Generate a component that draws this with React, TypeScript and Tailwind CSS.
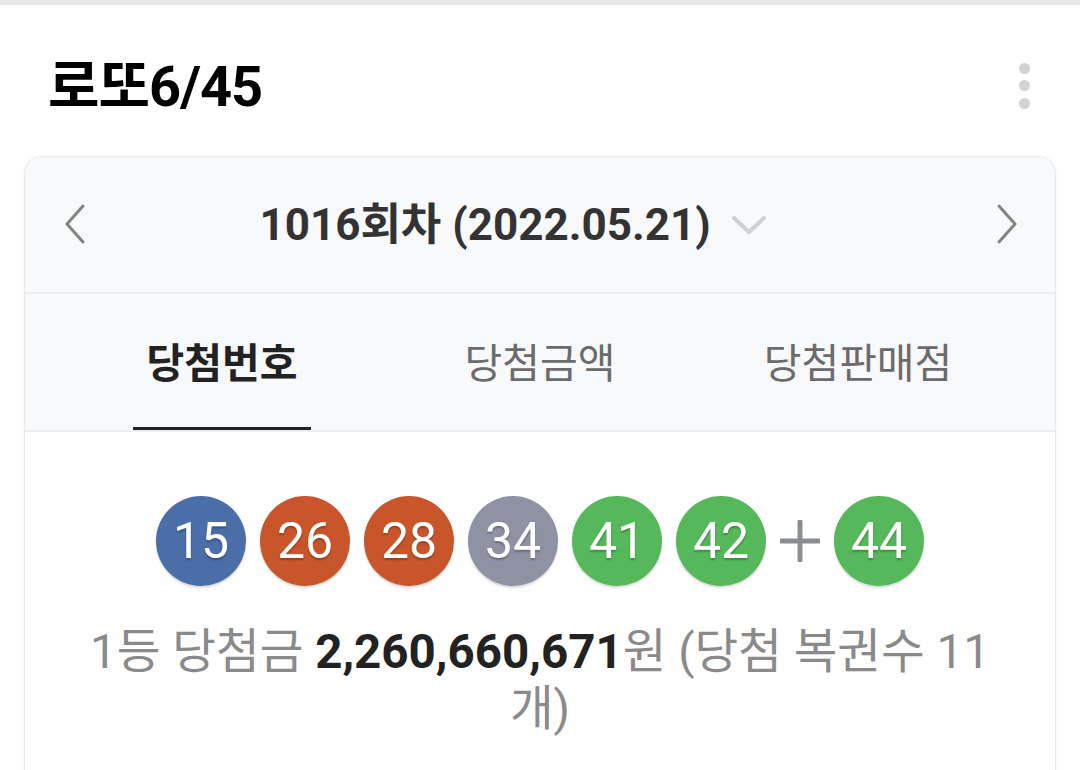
const balls = [
  { n: 15, c: "bg-[#4b6ea8]" },
  { n: 26, c: "bg-[#c9552a]" },
  { n: 28, c: "bg-[#c9552a]" },
  { n: 34, c: "bg-[#8e92a3]" },
  { n: 41, c: "bg-[#55b85a]" },
  { n: 42, c: "bg-[#55b85a]" },
]

function Ball({ n, c }: { n: number; c: string }) {
  return (
    <div
      className={`w-[90px] h-[90px] rounded-full ${c} flex items-center justify-center text-white text-[50px] shadow-[0_2px_2px_rgba(0,0,0,0.15)] [text-shadow:0_2px_2px_rgba(0,0,0,0.25)]`}
    >
      {n}
    </div>
  )
}

export default function App() {
  const tabs = ["당첨번호", "당첨금액", "당첨판매점"]
  return (
    <div
      className="w-[1080px] h-[770px] overflow-hidden bg-white"
      style={{ fontFamily: "Roboto, 'Noto Sans CJK KR', sans-serif" }}
    >
      <div className="h-[5px] bg-[#e8e9eb]" />
      <div className="flex items-center justify-between pl-[48px] pr-[50px] pt-[12px] h-[151px]">
        <h1 className="text-[56px] font-bold text-black tracking-[-1px]">로또6/45</h1>
        <div className="flex flex-col gap-[6.5px] pb-[2px]">
          <span className="w-[11px] h-[11px] rounded-full bg-[#d1d2d6]" />
          <span className="w-[11px] h-[11px] rounded-full bg-[#d1d2d6]" />
          <span className="w-[11px] h-[11px] rounded-full bg-[#d1d2d6]" />
        </div>
      </div>

      <div className="mx-[24px] rounded-t-[18px] border border-b-0 border-[#e6e8eb] shadow-[0_1px_4px_rgba(0,0,0,0.06)] overflow-hidden">
        <div className="bg-[#f8f9fb] h-[137px] flex items-center justify-between pl-[40px] pr-[38px] border-b-2 border-[#eceef1]">
          <svg width="20" height="40" viewBox="0 0 20 40" className="mt-[-2px]">
            <polyline points="18,2 2,20 18,38" fill="none" stroke="#828282" strokeWidth="3" strokeLinecap="round" strokeLinejoin="round" />
          </svg>
          <div className="flex items-center gap-[20px] pr-[56px]">
            <span className="text-[44px] font-bold text-[#333]">1016회차 (2022.05.21)</span>
            <svg width="36" height="20" viewBox="0 0 36 20">
              <polyline points="3,3 18,17 33,3" fill="none" stroke="#cfd0d3" strokeWidth="4" strokeLinecap="round" strokeLinejoin="round" />
            </svg>
          </div>
          <svg width="20" height="40" viewBox="0 0 20 40" className="mt-[-2px]">
            <polyline points="2,2 18,20 2,38" fill="none" stroke="#828282" strokeWidth="3" strokeLinecap="round" strokeLinejoin="round" />
          </svg>
        </div>

        <div className="bg-[#f8f9fb] h-[138px] grid grid-cols-3 px-[38px] border-b-2 border-[#eceef1]">
          {tabs.map((t, i) => (
            <div key={t} className="flex justify-center">
              <div
                className={`h-full flex items-center px-[14px] pt-[8px] text-[41px] ${
                  i === 0
                    ? "font-bold text-[#222] border-b-[3px] border-[#222] -mb-[2px]"
                    : "text-[#6b6b6b] border-b-[3px] border-transparent"
                }`}
              >
                {t}
              </div>
            </div>
          ))}
        </div>

        <div className="bg-white px-[56px] pt-[64px] h-[400px]">
          <div className="flex items-center justify-center gap-[14px]">
            {balls.map((b) => (
              <Ball key={b.n} n={b.n} c={b.c} />
            ))}
            <svg width="40" height="42" viewBox="0 0 40 42">
              <path d="M20 2 V40 M1 21 H39" stroke="#8a8d92" strokeWidth="5" strokeLinecap="round" />
            </svg>
            <Ball n={44} c="bg-[#55b85a]" />
          </div>
          <p className="mt-[38px] text-center text-[47.5px] leading-[57px] text-[#8a8a8a]">
            1등 당첨금 <span className="font-bold text-[#222]">2,260,660,671</span>원 (당첨 복권수 11 개)
          </p>
        </div>
      </div>
    </div>
  )
}
